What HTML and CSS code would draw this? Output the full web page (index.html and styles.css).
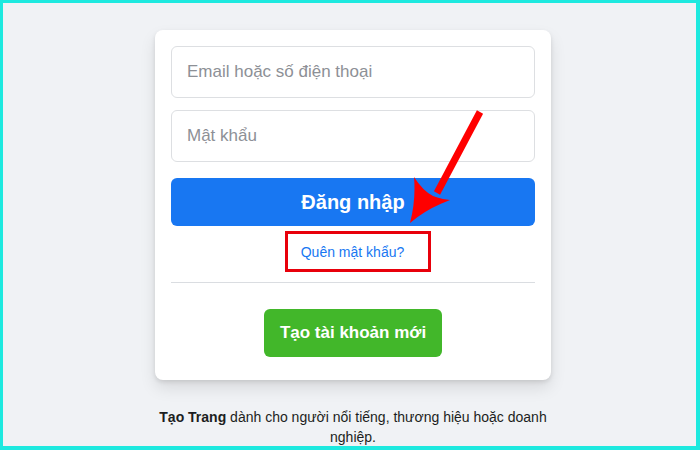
FILE: index.html
```html
<!DOCTYPE html>
<html lang="vi">
<head>
    <meta charset="UTF-8">
    <title>Đăng nhập</title>
    <link rel="stylesheet" href="styles.css">
</head>
<body>
<div class="frame">
    <div class="column">
        <div class="login_card">
            <input class="field" type="text" placeholder="Email hoặc số điện thoại">
            <input class="field" type="password" placeholder="Mật khẩu">
            <button class="login_button">Đăng nhập</button>
            <div class="forgot_row">
                <span class="mark_box"><a class="forgot_link" href="#">Quên mật khẩu?</a></span>
            </div>
            <div class="divider"></div>
            <div class="create_row">
                <button class="create_button">Tạo tài khoản mới</button>
            </div>
            <svg class="arrow" width="396" height="349" viewBox="0 0 396 349">
                <line x1="325" y1="82" x2="282" y2="163" stroke="#ff0000" stroke-width="7"/>
                <path d="M255 193 Q261 170 259 147 Q268 161 278 166 Q286 169 295 170 Q271 179 255 193 Z" fill="#ff0000"/>
            </svg>
        </div>
        <p class="page_note"><b>Tạo Trang</b> dành cho người nổi tiếng, thương hiệu hoặc doanh nghiệp.</p>
    </div>
</div>
</body>
</html>
```

FILE: styles.css
```css
* {
    box-sizing: border-box;
}

body {
    margin: 0;
    font-family: "Liberation Sans", Arial, sans-serif;
    color: #1c1e21;
}

.frame {
    width: 700px;
    height: 450px;
    border-style: solid;
    border-color: #1de9df;
    border-width: 3px 4px 4px 3px;
    background: #f0f2f5;
    padding-left: 7px;
    overflow: hidden;
}

.column {
    width: 396px;
    margin: 27px auto 0;
}

.login_card {
    position: relative;
    background: #fff;
    border-radius: 8px;
    box-shadow: 0 2px 4px rgba(0, 0, 0, .1), 0 8px 16px rgba(0, 0, 0, .1);
    padding: 16px 16px 23px;
}

.field {
    display: block;
    width: 100%;
    height: 52px;
    border: 1px solid #dddfe2;
    border-radius: 6px;
    padding: 14px 15px;
    font-family: inherit;
    font-size: 17px;
    color: #1c1e21;
    margin-bottom: 12px;
    outline: none;
}

.field::placeholder {
    color: #8d9096;
}

.login_button {
    display: block;
    width: 100%;
    height: 48px;
    margin-top: 16px;
    border: none;
    border-radius: 6px;
    background: #1877f2;
    color: #fff;
    font-family: inherit;
    font-size: 20px;
    font-weight: bold;
}

.forgot_row {
    display: flex;
    justify-content: center;
    margin-top: 5px;
    padding-left: 10px;
}

.mark_box {
    display: block;
    border: 3px solid #e8000b;
    padding: 8px 24px 7px 13px;
    line-height: 19px;
}

.forgot_link {
    font-size: 14px;
    color: #1877f2;
    text-decoration: none;
}

.divider {
    height: 1px;
    background: #dadde1;
    margin-top: 10px;
}

.create_row {
    display: flex;
    justify-content: center;
    margin-top: 26px;
}

.create_button {
    height: 48px;
    padding: 0 16px;
    border: none;
    border-radius: 6px;
    background: #42b72a;
    color: #fff;
    font-family: inherit;
    font-size: 17px;
    font-weight: bold;
}

.arrow {
    position: absolute;
    left: 0;
    top: 0;
    overflow: visible;
    pointer-events: none;
}

.page_note {
    margin: 27px 0 0;
    font-size: 14px;
    line-height: 20px;
    text-align: center;
}
```
